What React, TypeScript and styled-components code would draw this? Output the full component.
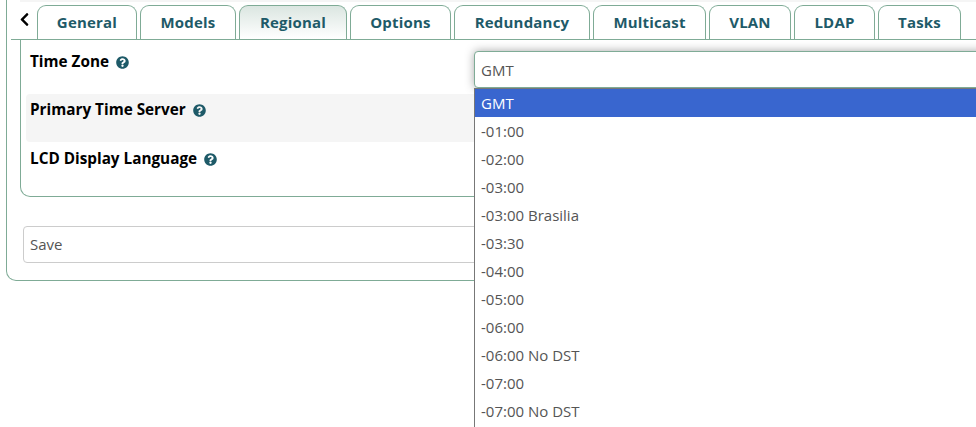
import React from 'react'
import styled, { createGlobalStyle } from 'styled-components'
import { FaChevronLeft, FaQuestionCircle } from 'react-icons/fa'

const GlobalStyle = createGlobalStyle`
  html, body {
    margin: 0;
    height: 427px;
    overflow: hidden;
    background: #fff;
    font-family: "Open Sans", "Liberation Sans", sans-serif;
  }
`

const Page = styled.div`
  width: 976px;
  height: 427px;
  overflow: hidden;
`

const Card = styled.div`
  box-sizing: border-box;
  width: 1100px;
  height: 281px;
  margin-left: 6px;
  padding: 0 0 0 4px;
  border: 1px solid #7fab96;
  border-top: none;
  border-radius: 0 0 10px 10px;
`

const TopStrip = styled.div`
  height: 2px;
  margin: 0 0 3px 9px;
  background: #f5f5f5;
`

const TabBar = styled.div`
  display: flex;
  gap: 3px;
  height: 35px;
  box-sizing: border-box;
  border-bottom: 1px solid #7fab96;
`

const BackButton = styled.div`
  width: 23px;
  height: 34px;
  box-sizing: border-box;
  padding: 7px 0 0 6px;
  color: #000;
  font-size: 15px;
  line-height: 1;
`

const Tab = styled.div<{ $active?: boolean; $width: number }>`
  box-sizing: border-box;
  height: 34px;
  width: ${p => p.$width}px;
  border: 1px solid #7fab96;
  border-bottom: none;
  border-radius: 9px 9px 0 0;
  background: ${p => (p.$active ? 'linear-gradient(180deg, #dbe6e1 0%, #fff 100%)' : '#fff')};
  color: #1e5a68;
  font-size: 15px;
  font-weight: 700;
  letter-spacing: 0.2px;
  line-height: 32px;
  text-align: center;
`

const Panel = styled.div`
  box-sizing: border-box;
  height: 157px;
  margin-left: 9px;
  padding: 0 0 0 5px;
  border: 1px solid #7fab96;
  border-top: none;
  border-radius: 0 0 10px 10px;
`

const Row = styled.div<{ $shaded?: boolean; $height: number }>`
  display: grid;
  grid-template-columns: 448px 1fr;
  height: ${p => p.$height}px;
  margin-bottom: ${p => (p.$shaded ? 1 : 0)}px;
  border-radius: 4px;
  background: ${p => (p.$shaded ? '#f5f5f5' : 'transparent')};
`

const Label = styled.div<{ $top?: number }>`
  padding: ${p => p.$top ?? 5}px 0 0 4px;
  color: #000;
  font-size: 15.3px;
  font-weight: 700;
  line-height: 20px;
  display: flex;
  align-items: flex-start;
  gap: 7px;
`

const HelpIcon = styled(FaQuestionCircle)`
  flex: none;
  margin-top: 5px;
  width: 13px;
  height: 13px;
  color: #1e5a68;
`

const Field = styled.div`
  position: relative;
  padding-top: 11px;
`

const SelectBox = styled.div`
  box-sizing: border-box;
  height: 37px;
  padding: 0 6px;
  border: 1px solid #7fab96;
  border-radius: 4px;
  box-shadow: 0 0 10px rgba(0, 0, 0, 0.35);
  background: #fff;
  color: #555;
  font-size: 15px;
  line-height: 37px;
`

const Dropdown = styled.ul`
  position: absolute;
  top: 48px;
  left: 0;
  right: 0;
  margin: 0;
  padding: 0 0 10px;
  list-style: none;
  border-left: 1px solid #777;
  border-top: 1px solid #777;
  background: #fff;
  z-index: 5;
`

const Option = styled.li<{ $selected?: boolean }>`
  height: 28px;
  padding-left: 6px;
  background: ${p => (p.$selected ? '#3966cf' : 'transparent')};
  color: ${p => (p.$selected ? '#fff' : '#555')};
  font-size: 15px;
  line-height: 28px;
`

const SaveField = styled.div`
  box-sizing: border-box;
  height: 37px;
  margin: 29px 0 0 12px;
  padding: 0 6px;
  border: 1px solid #ccc;
  border-radius: 4px;
  color: #555;
  font-size: 15px;
  line-height: 35px;
`

const tabs = [
  { name: 'General', width: 100 },
  { name: 'Models', width: 96 },
  { name: 'Regional', width: 108, active: true },
  { name: 'Options', width: 101 },
  { name: 'Redundancy', width: 136 },
  { name: 'Multicast', width: 113 },
  { name: 'VLAN', width: 82 },
  { name: 'LDAP', width: 81 },
  { name: 'Tasks', width: 83 },
]

const zones = [
  'GMT', '-01:00', '-02:00', '-03:00', '-03:00 Brasilia', '-03:30', '-04:00',
  '-05:00', '-06:00', '-06:00 No DST', '-07:00', '-07:00 No DST',
]

const App: React.FC = () => {
  return (
    <Page>
      <GlobalStyle />
      <Card>
        <TopStrip />
        <TabBar>
          <BackButton>
            <FaChevronLeft />
          </BackButton>
          {tabs.map(t => (
            <Tab key={t.name} $active={t.active} $width={t.width}>{t.name}</Tab>
          ))}
        </TabBar>
        <Panel>
          <Row $height={54}>
            <Label $top={11}>Time Zone <HelpIcon /></Label>
            <Field>
              <SelectBox>GMT</SelectBox>
              <Dropdown>
                {zones.map((z, i) => (
                  <Option key={z} $selected={i === 0}>{z}</Option>
                ))}
              </Dropdown>
            </Field>
          </Row>
          <Row $shaded $height={48}>
            <Label>Primary Time Server <HelpIcon /></Label>
          </Row>
          <Row $height={48}>
            <Label>LCD Display Language <HelpIcon /></Label>
          </Row>
        </Panel>
        <SaveField>Save</SaveField>
      </Card>
    </Page>
  )
}

export default App
